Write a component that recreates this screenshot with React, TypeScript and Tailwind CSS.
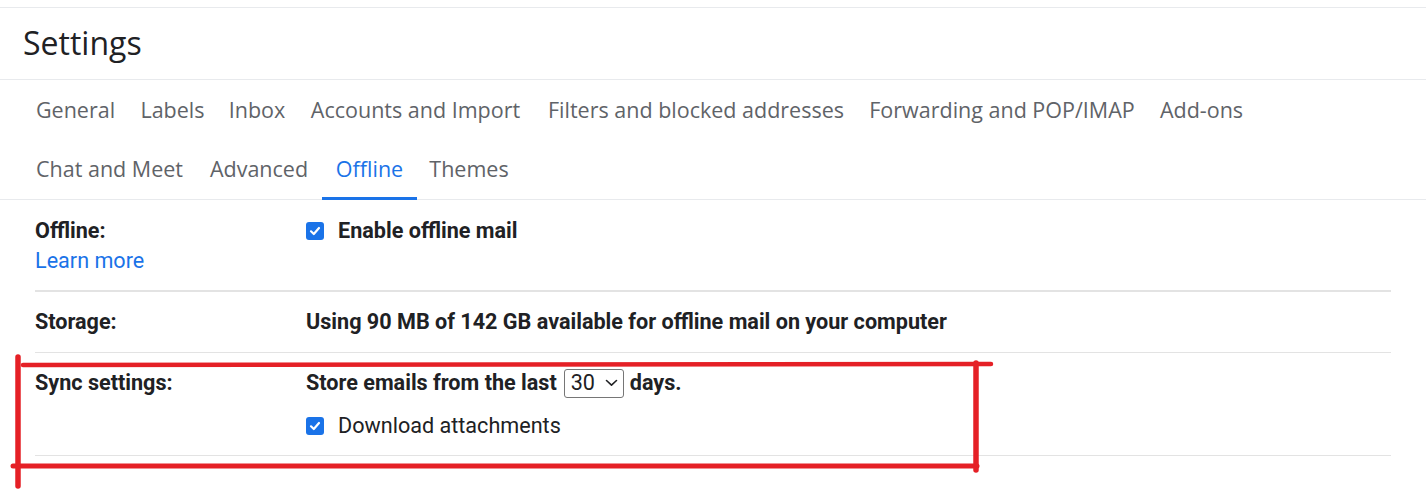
import React from "react";

const row1 = [
  { t: "General", w: "w-[105px]" },
  { t: "Labels", w: "w-[89px]" },
  { t: "Inbox", w: "w-[80px]" },
  { t: "Accounts and Import", w: "w-[237px]" },
  { t: "Filters and blocked addresses", w: "w-[324px]" },
  { t: "Forwarding and POP/IMAP", w: "w-[288px]" },
  { t: "Add-ons", w: "w-[111px]" },
];
const row2 = [
  { t: "Chat and Meet", w: "w-[173px]" },
  { t: "Advanced", w: "w-[126px]" },
  { t: "Offline", w: "w-[95px]", active: true },
  { t: "Themes", w: "w-[104px]" },
];

function Tab({ t, w, active }: { t: string; w: string; active?: boolean }) {
  return (
    <div className={`relative h-full flex items-center justify-center ${w}`}>
      <span className={`whitespace-nowrap ${active ? "text-[#1a73e8]" : "text-[#5f6368]"}`}>{t}</span>
      {active && <div className="absolute left-0 right-0 bottom-[-1px] h-[3px] bg-[#1a73e8]" />}
    </div>
  );
}

function Check() {
  return (
    <div className="w-[18px] h-[18px] rounded-[3px] bg-[#1a73e8] flex items-center justify-center shrink-0">
      <svg width="12" height="12" viewBox="0 0 12 12" fill="none">
        <path d="M2 6.3 L4.8 9 L10 3" stroke="white" strokeWidth="2.2" strokeLinecap="round" strokeLinejoin="round" />
      </svg>
    </div>
  );
}

export default function App() {
  return (
    <div className="relative w-[1426px] h-[489px] bg-white overflow-hidden font-['Roboto',sans-serif] text-[#202124]">
      <div className="mt-[7px] border-t border-b border-[#e8eaed] h-[73px] flex items-center pl-[23px]">
        <span className="font-['Open_Sans',sans-serif] text-[32px] text-[#202124] leading-none pb-[1px]">Settings</span>
      </div>
      <div className="border-b border-[#e8eaed] px-[23px] font-['Open_Sans',sans-serif] text-[21.5px]">
        <div className="h-[60px] flex">
          {row1.map((x) => (
            <Tab key={x.t} t={x.t} w={x.w} />
          ))}
        </div>
        <div className="h-[59px] flex">
          {row2.map((x) => (
            <Tab key={x.t} t={x.t} w={x.w} active={x.active} />
          ))}
        </div>
      </div>
      <div className="px-[35px] text-[21.6px] leading-[30px]">
        <div className="flex pt-[16px] pb-[14px] border-b-2 border-[#e3e3e3]">
          <div className="w-[271px] shrink-0">
            <div className="font-bold">Offline:</div>
            <div className="text-[#1a73e8]">Learn more</div>
          </div>
          <div className="flex items-center h-[30px] gap-[14px] font-bold">
            <Check />
            <span>Enable offline mail</span>
          </div>
        </div>
        <div className="flex pt-[15px] pb-[15px] border-b border-[#e3e3e3]">
          <div className="w-[271px] shrink-0 font-bold">Storage:</div>
          <div className="font-bold whitespace-nowrap">Using 90 MB of 142 GB available for offline mail on your computer</div>
        </div>
        <div className="flex pt-[15px] pb-[14px] border-b border-[#e3e3e3]">
          <div className="w-[271px] shrink-0 font-bold">Sync settings:</div>
          <div>
            <div className="flex items-center h-[30px] font-bold">
              <span>Store emails from the last</span>
              <div className="ml-[7px] mr-[6px] w-[60px] h-[29px] border border-[#767676] rounded-[3px] flex items-center pl-[6px] pr-[5px] justify-between font-normal">
                <span>30</span>
                <svg width="13" height="8" viewBox="0 0 13 8" fill="none">
                  <path d="M1.5 1.5 L6.5 6.2 L11.5 1.5" stroke="#202124" strokeWidth="1.6" strokeLinecap="round" strokeLinejoin="round" />
                </svg>
              </div>
              <span>days.</span>
            </div>
            <div className="flex items-center h-[30px] mt-[13px] gap-[14px]">
              <Check />
              <span>Download attachments</span>
            </div>
          </div>
        </div>
      </div>
      <svg className="absolute left-0 top-0 pointer-events-none" width="1426" height="489">
        <g stroke="#e52026" strokeLinecap="round" fill="none">
          <path d="M23 365 L991 364" strokeWidth="4.5" />
          <path d="M18 357 L18 486" strokeWidth="5.5" />
          <path d="M13 466 L977 466" strokeWidth="5" />
          <path d="M976 363 L976 470" strokeWidth="5.5" />
        </g>
      </svg>
    </div>
  );
}
